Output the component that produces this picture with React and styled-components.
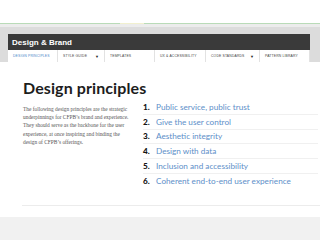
import React from 'react'
import styled, { createGlobalStyle } from 'styled-components'

const GlobalStyle = createGlobalStyle`
  html, body {
    margin: 0;
    padding: 0;
    background: #ffffff;
  }
  body {
    width: 320px;
    height: 240px;
    overflow: hidden;
    font-family: "Liberation Sans", Arial, sans-serif;
  }
`

const Page = styled.div`
  width: 320px;
  height: 240px;
  display: flex;
  flex-direction: column;
  background: #ffffff;
`

const TopSpace = styled.div`
  height: 23px;
  background: #ffffff;
`

const Rule = styled.div`
  height: 1px;
  display: flex;
  background: #b9dbb8;
`

const RuleHighlight = styled.div`
  margin-left: 120px;
  width: 24px;
  background: #f1f0cf;
`

const Band = styled.div`
  background: linear-gradient(#ececec 0, #ececec 3px, #dcdcdc 3px);
  padding: 10px 10px 0 8px;
  display: flex;
  flex-direction: column;
`

const TitleBar = styled.div`
  height: 16px;
  background: #3a3a3a;
  display: flex;
  align-items: center;
  padding-left: 4px;
  color: #ffffff;
  font-weight: bold;
  font-size: 8px;
`

const Nav = styled.div`
  height: 12px;
  background: #ffffff;
  display: flex;
`

const NavItem = styled.div`
  width: ${p => p.w}px;
  box-sizing: border-box;
  border-right: 1px solid #e2e2e2;
  display: flex;
  align-items: center;
  justify-content: space-between;
  padding: 0 5px 0 5px;
  font-size: 3.4px;
  letter-spacing: 0.15px;
  color: ${p => (p.active ? '#4a86c8' : '#444444')};
`

const Caret = styled.span`
  font-size: 4px;
  color: #222222;
`

const Content = styled.div`
  display: flex;
  padding: 16px 0 0 23px;
  height: 143px;
  box-sizing: border-box;
`

const Intro = styled.div`
  width: 118px;
  display: flex;
  flex-direction: column;
`

const Heading = styled.h1`
  margin: 0;
  font-family: "Lato", "Open Sans", sans-serif;
  font-weight: 700;
  font-size: 16px;
  letter-spacing: 0.1px;
  line-height: 20px;
  color: #1d1d1d;
  white-space: nowrap;
`

const Lead = styled.p`
  margin: 7px 0 0;
  font-family: "Liberation Serif", "Times New Roman", serif;
  font-size: 5.4px;
  line-height: 8.2px;
  color: #555555;
  white-space: nowrap;
`

const List = styled.ol`
  margin: 22px 0 0 2px;
  padding: 0;
  list-style: none;
  display: flex;
  flex-direction: column;
  width: 175px;
`

const Item = styled.li`
  height: 14.8px;
  display: flex;
  align-items: center;
  border-bottom: ${p => (p.last ? 'none' : '1px solid #f0f0f0')};
  box-sizing: border-box;
  font-family: "Lato", "Open Sans", sans-serif;
  font-size: 8.2px;
`

const Num = styled.span`
  width: 13px;
  font-weight: 900;
  color: #141414;
`

const Label = styled.span`
  color: #5d8fc9;
`

const Footer = styled.div`
  margin-left: 22px;
  height: 11px;
  border-top: 1px solid #ececec;
`

const Bottom = styled.div`
  flex: 1;
  background: #f1f1f1;
`

const navItems = [
  { label: 'DESIGN PRINCIPLES', w: 50, active: true },
  { label: 'STYLE GUIDE', w: 47, caret: true },
  { label: 'TEMPLATES', w: 50 },
  { label: 'UX & ACCESSIBILITY', w: 51 },
  { label: 'CODE STANDARDS', w: 54, caret: true },
  { label: 'PATTERN LIBRARY', w: 50 },
]

const principles = [
  'Public service, public trust',
  'Give the user control',
  'Aesthetic integrity',
  'Design with data',
  'Inclusion and accessibility',
  'Coherent end-to-end user experience',
]

export default function App() {
  return (
    <>
      <GlobalStyle />
      <Page>
        <TopSpace />
        <Rule>
          <RuleHighlight />
        </Rule>
        <Band>
          <TitleBar>Design &amp; Brand</TitleBar>
          <Nav>
            {navItems.map(item => (
              <NavItem key={item.label} w={item.w} active={item.active}>
                <span>{item.label}</span>
                {item.caret && <Caret>▼</Caret>}
              </NavItem>
            ))}
          </Nav>
        </Band>
        <Content>
          <Intro>
            <Heading>Design principles</Heading>
            <Lead>
              The following design principles are the strategic<br />
              underpinnings for CFPB’s brand and experience.<br />
              They should serve as the backbone for the user<br />
              experience, at once inspiring and binding the<br />
              design of CFPB’s offerings.
            </Lead>
          </Intro>
          <List>
            {principles.map((p, i) => (
              <Item key={p} last={i === principles.length - 1}>
                <Num>{i + 1}.</Num>
                <Label>{p}</Label>
              </Item>
            ))}
          </List>
        </Content>
        <Footer />
        <Bottom />
      </Page>
    </>
  )
}
